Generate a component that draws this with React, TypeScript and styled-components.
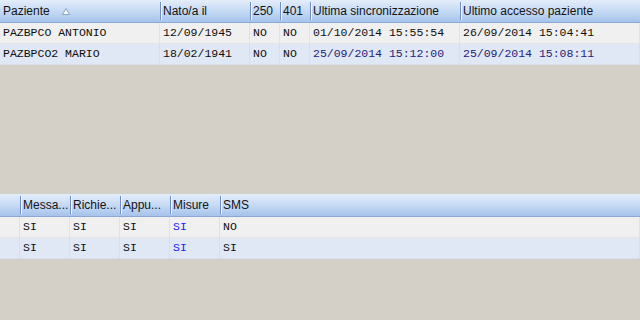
import React from "react";
import styled, { createGlobalStyle } from "styled-components";

const GlobalStyle = createGlobalStyle`
  html, body {
    margin: 0;
    padding: 0;
    background: #d4d0c8;
  }
`;

const Page = styled.div`
  width: 640px;
  height: 320px;
  overflow: hidden;
  background: #d4d0c8;
  display: flex;
  flex-direction: column;
  gap: 129px;
`;

const Grid = styled.div<{ $cols: string }>`
  display: grid;
  grid-template-columns: ${(p) => p.$cols};
  width: 640px;
`;

const HeadCell = styled.div<{ $sep?: boolean }>`
  position: relative;
  height: 22px;
  border-bottom: 1px solid #8ba8d2;
  background: linear-gradient(#e4edfa, #c6daf4 50%, #a6c3eb);
  font-family: "Liberation Sans", Arial, sans-serif;
  font-size: 12px;
  color: #141414;
  line-height: 22px;
  padding-left: 3px;
  white-space: nowrap;
  overflow: hidden;
  display: flex;
  align-items: center;
  gap: 12px;

  &::before {
    content: "";
    display: ${(p) => (p.$sep ? "block" : "none")};
    position: absolute;
    left: 0;
    top: 2px;
    bottom: 2px;
    width: 1px;
    background: #6e8fc0;
    box-shadow: 1px 0 0 #f4f8fe;
  }
`;

const Cell = styled.div<{ $alt?: boolean; $color?: string }>`
  height: 20px;
  border-bottom: 1px solid ${(p) => (p.$alt ? "#d7dfec" : "#e4e4e4")};
  border-right: 1px solid ${(p) => (p.$alt ? "#d7dfec" : "#e2e2e2")};
  background: ${(p) => (p.$alt ? "#e1e8f5" : "#f0f0f0")};
  font-family: "Liberation Mono", "Courier New", monospace;
  font-size: 11.5px;
  line-height: 20px;
  color: ${(p) => p.$color ?? "#0e0e0e"};
  padding-left: 3px;
  white-space: nowrap;
  overflow: hidden;
`;

const SortArrow = () => (
  <svg width="8" height="7" viewBox="0 0 8 7">
    <polygon points="4,0.5 7.5,6.5 0.5,6.5" fill="#f6f9fe" stroke="#8da3c2" strokeWidth="1" />
  </svg>
);

const navy = "#22227a";
const blue = "#2222ee";

const topHeads = ["Paziente", "Nato/a il", "250", "401", "Ultima sincronizzazione", "Ultimo accesso paziente"];
const topRows: { cells: string[]; colors: (string | undefined)[] }[] = [
  {
    cells: ["PAZBPCO ANTONIO", "12/09/1945", "NO", "NO", "01/10/2014 15:55:54", "26/09/2014 15:04:41"],
    colors: [],
  },
  {
    cells: ["PAZBPCO2 MARIO", "18/02/1941", "NO", "NO", "25/09/2014 15:12:00", "25/09/2014 15:08:11"],
    colors: [undefined, undefined, undefined, undefined, navy, navy],
  },
];

const bottomHeads = ["", "Messa...", "Richie...", "Appu...", "Misure", "SMS"];
const bottomRows = [
  ["", "SI", "SI", "SI", "SI", "NO"],
  ["", "SI", "SI", "SI", "SI", "SI"],
];

export default function App() {
  return (
    <>
      <GlobalStyle />
      <Page>
        <Grid $cols="160px 90px 30px 30px 150px 1fr">
          {topHeads.map((h, i) => (
            <HeadCell key={h} $sep={i > 0}>
              {h}
              {i === 0 && <SortArrow />}
            </HeadCell>
          ))}
          {topRows.map((r, ri) =>
            r.cells.map((c, ci) => (
              <Cell key={`${ri}-${ci}`} $alt={ri === 1} $color={r.colors[ci]}>
                {c}
              </Cell>
            ))
          )}
        </Grid>
        <Grid $cols="20px 50px 50px 50px 50px 1fr">
          {bottomHeads.map((h, i) => (
            <HeadCell key={i} $sep={i > 0}>
              {h}
            </HeadCell>
          ))}
          {bottomRows.map((r, ri) =>
            r.map((c, ci) => (
              <Cell key={`${ri}-${ci}`} $alt={ri === 1} $color={ci === 4 ? blue : undefined}>
                {c}
              </Cell>
            ))
          )}
        </Grid>
      </Page>
    </>
  );
}
